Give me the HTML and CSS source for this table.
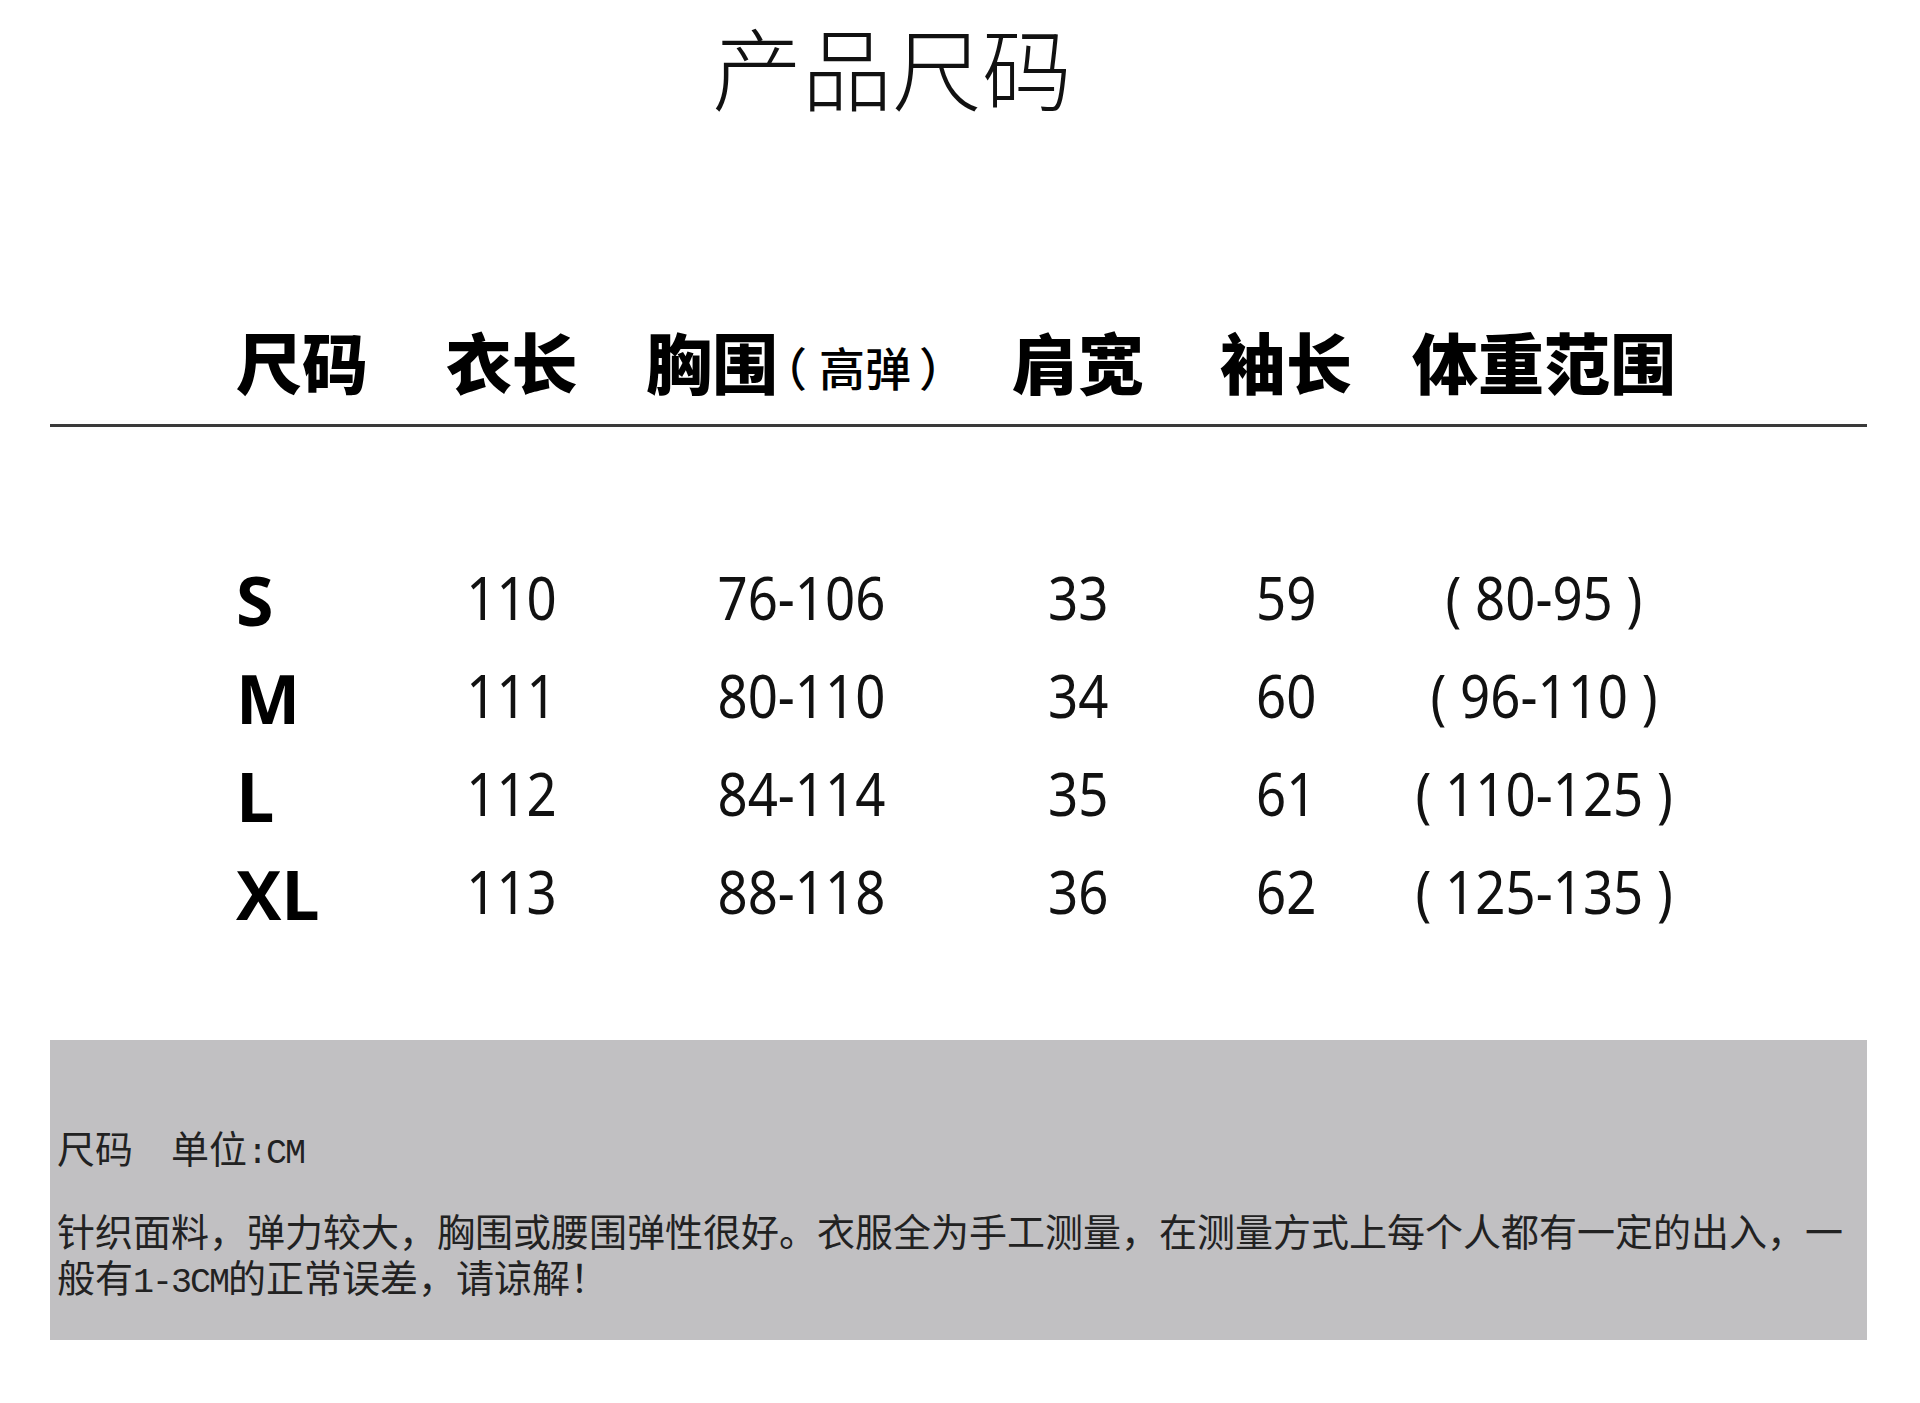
FILE: index.html
```html
<!DOCTYPE html>
<html lang="zh-CN">
<head>
<meta charset="utf-8">
<title>产品尺码</title>
<link rel="stylesheet" href="styles.css">
</head>
<body>
<main class="page">
  <h1 class="title">产品尺码</h1>

  <div class="grid head">
    <div class="cell first">尺码</div>
    <div class="cell c2">衣长</div>
    <div class="cell chest">胸围<span class="sub"><span class="pl">（</span>高弹<span class="pr">）</span></span></div>
    <div class="cell">肩宽</div>
    <div class="cell">袖长</div>
    <div class="cell">体重范围</div>
  </div>

  <div class="rule"></div>

  <div class="body">
    <div class="grid row">
      <div class="cell size">S</div>
      <div class="cell c2"><span class="num">110</span></div>
      <div class="cell c3"><span class="num">76-106</span></div>
      <div class="cell"><span class="num">33</span></div>
      <div class="cell"><span class="num">59</span></div>
      <div class="cell"><span class="num">( 80-95 )</span></div>
    </div>
    <div class="grid row">
      <div class="cell size">M</div>
      <div class="cell c2"><span class="num">111</span></div>
      <div class="cell c3"><span class="num">80-110</span></div>
      <div class="cell"><span class="num">34</span></div>
      <div class="cell"><span class="num">60</span></div>
      <div class="cell"><span class="num">( 96-110 )</span></div>
    </div>
    <div class="grid row">
      <div class="cell size">L</div>
      <div class="cell c2"><span class="num">112</span></div>
      <div class="cell c3"><span class="num">84-114</span></div>
      <div class="cell"><span class="num">35</span></div>
      <div class="cell"><span class="num">61</span></div>
      <div class="cell"><span class="num">( 110-125 )</span></div>
    </div>
    <div class="grid row">
      <div class="cell size">XL</div>
      <div class="cell c2"><span class="num">113</span></div>
      <div class="cell c3"><span class="num">88-118</span></div>
      <div class="cell"><span class="num">36</span></div>
      <div class="cell"><span class="num">62</span></div>
      <div class="cell"><span class="num">( 125-135 )</span></div>
    </div>
  </div>

  <section class="note">
    <p class="unit">尺码　单位<span class="half">:CM</span></p>
    <p class="desc">针织面料，弹力较大，胸围或腰围弹性很好。衣服全为手工测量，在测量方式上每个人都有一定的出入，一般有<span class="half">1-3CM</span>的正常误差，请谅解！</p>
  </section>
</main>
</body>
</html>
```

FILE: styles.css
```css
html, body {
  margin: 0;
  padding: 0;
  background: #ffffff;
}

body {
  font-family: "Noto Sans CJK SC", "Noto Sans", sans-serif;
  color: #000;
}

.page {
  width: 1817px;
  margin-left: 50px;
  padding-top: 20px;
}

.title {
  margin: 0 0 0 662px;
  font-size: 90px;
  line-height: 90px;
  font-weight: 300;
  color: #111;
}

.grid {
  display: grid;
  grid-template-columns: 131px 279px 299px 266px 150px 366px;
  margin-left: 186px;
}

.cell {
  text-align: center;
  white-space: nowrap;
}

.cell.c2 {
  padding-left: 10px;
}

.cell.c3 {
  padding-left: 11px;
}

.cell.first,
.cell.size,
.cell.chest {
  text-align: left;
}

.head {
  margin-top: 217px;
  font-size: 66px;
  line-height: 66px;
  font-weight: 900;
}

.sub {
  font-size: 46px;
  line-height: 1;
  font-weight: 500;
  vertical-align: 3px;
}

.pl,
.pr {
  font-feature-settings: "halt" 1;
}

.pl {
  margin-left: 6px;
  margin-right: 12px;
}

.pr {
  margin-left: 8px;
}

.rule {
  margin-top: 31px;
  height: 3px;
  background: #3a3a3a;
}

.body {
  margin-top: 121px;
}

.row {
  height: 98px;
  font-family: "Noto Sans", "Open Sans", sans-serif;
  font-size: 60px;
  line-height: 98px;
  color: #111;
}

.num {
  display: inline-block;
  transform: scaleX(0.88);
}

.cell.size {
  font-family: "Open Sans", "Noto Sans", sans-serif;
  font-weight: 700;
  font-size: 68px;
  line-height: 92px;
  padding-top: 6px;
  color: #000;
}

.note {
  margin-top: 100px;
  height: 300px;
  box-sizing: border-box;
  padding: 84px 20px 0 7px;
  background: #c1c0c2;
  font-family: "Noto Sans CJK SC", sans-serif;
  font-size: 38px;
  line-height: 46px;
  color: #222;
}

.note p {
  margin: 0;
}

.note .unit {
  margin-bottom: 37px;
}

.half {
  font-family: "Liberation Mono", "Noto Sans CJK SC", monospace;
  font-size: 35px;
  letter-spacing: -2px;
  line-height: 30px;
}
```
